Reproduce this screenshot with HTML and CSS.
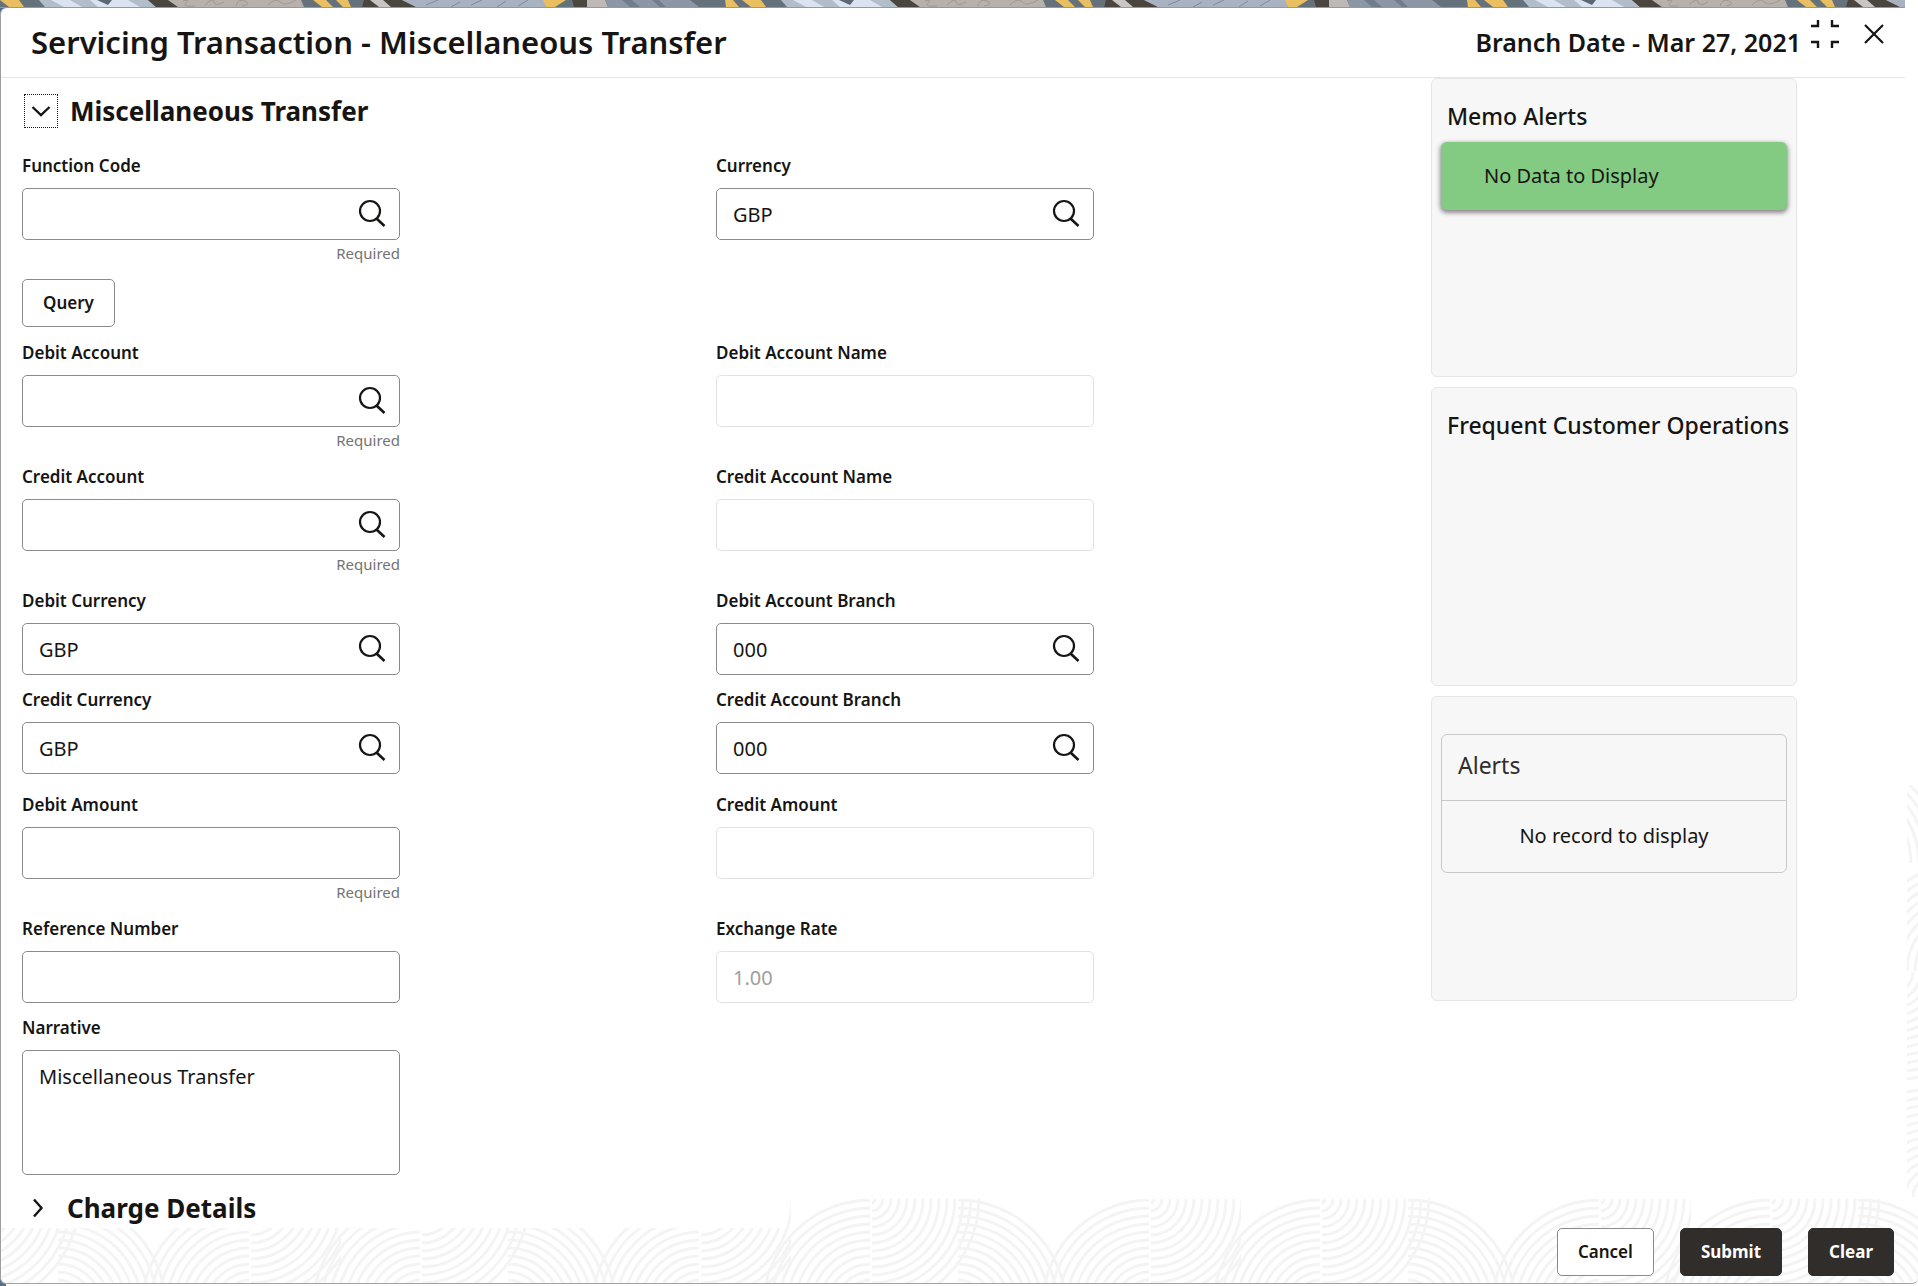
FILE: index.html
```
<!DOCTYPE html>
<html lang="en">
<head>
<meta charset="UTF-8">
<meta name="viewport" content="width=device-width, initial-scale=1">
<title>Servicing Transaction - Miscellaneous Transfer</title>
<link rel="stylesheet" href="styles.css">
</head>
<body>

<!-- shared icons -->
<svg class="defs" width="0" height="0" aria-hidden="true">
    <symbol id="icon-search" viewBox="0 0 28 28">
        <circle cx="12" cy="12" r="10" fill="none" stroke="#161513" stroke-width="2.2"/>
        <path d="M18.5 19.5L26.5 27" fill="none" stroke="#161513" stroke-width="2.6"/>
    </symbol>
</svg>

<!-- banner strip -->
<div class="banner">
    <svg width="100%" height="7" aria-hidden="true">
        <defs>
            <pattern id="strip" width="742" height="7" patternUnits="userSpaceOnUse">
                <rect width="742" height="7" fill="#66727b"/>
                <path d="M0 0H19L24 7H9Z" fill="#e9bf62"/>
                <path d="M39 0H148L156 7H45Z" fill="#b1bdc8"/>
                <path d="M51 0H70L82 7H64Z" fill="#dbe3f0"/>
                <path d="M80 0H128L140 7H94Z" fill="#dbe3f0"/>
                <path d="M78 0H90L98 7H86Z" fill="#b1bdc8"/>
                <path d="M97 0H112L108 5Z" fill="#5c6973"/>
                <path d="M148 0H168L178 7H156Z" fill="#4b4540"/>
                <path d="M168 0H301L304 7H178Z" fill="#b8b1ab"/>
                <path d="M183 1q8-2 3 2t9 3M205 5q8-8 9-3t10 0M236 6q2-8 9-5t-3 5M268 5q8-8 12-3t16-2" fill="none" stroke="#9d9893" stroke-width="1"/>
                <path d="M313 0H326L333 7H322ZM336 0H348L351 7H343Z" fill="#e9bf62"/>
                <path d="M364 0H402L416 7H362Z" fill="#4b4540"/>
                <path d="M370 0H383L391 7H379Z" fill="#c9c5c2"/>
                <path d="M402 0H544L546 7H416Z" fill="#a9b2c0"/>
                <path d="M438 0L426 5M460 2L451 7M482 0L471 5M506 1L497 7M528 0L518 6" stroke="#7f8a99" stroke-width="1"/>
                <path d="M543 0H566L555 7H546Z" fill="#e9bf62"/>
                <path d="M572 0H587V7H574Z" fill="#4b4540"/>
                <path d="M587 0H605L608 7H587Z" fill="#beb9b6"/>
                <path d="M605 0H690L699 7H608Z" fill="#8c96a5"/>
                <path d="M622 0L630 7H640L632 0ZM652 0L660 7H666L659 0Z" fill="#707d8a"/>
                <path d="M725 0H733L739 7H726Z" fill="#e9bf62"/>
            </pattern>
        </defs>
        <rect width="100%" height="7" fill="url(#strip)"/>
    </svg>
</div>

<div class="dialog">

    <header class="dialog-header">
        <h1>Servicing Transaction - Miscellaneous Transfer</h1>
        <span class="branch-date">Branch Date - Mar 27, 2021</span>
        <div class="window-buttons">
            <button type="button" class="icon-button" aria-label="Collapse">
                <svg width="28" height="28" viewBox="0 0 28 28" fill="none" stroke="#161513" stroke-width="2.4">
                    <path d="M0 6H7V0M21 0V6H28M0 22H7V28M28 22H21V28"/>
                </svg>
            </button>
            <button type="button" class="icon-button" aria-label="Close">
                <svg width="28" height="28" viewBox="0 0 28 28" fill="none" stroke="#161513" stroke-width="2.2">
                    <path d="M5 5L23 23M23 5L5 23"/>
                </svg>
            </button>
        </div>
    </header>

    <div class="dialog-body">

        <main class="form">
            <div class="section-title">
                <button type="button" class="toggle open" aria-label="Toggle Miscellaneous Transfer" aria-expanded="true">
                    <svg width="20" height="20" viewBox="0 0 20 20" fill="none" stroke="#161513" stroke-width="2.4">
                        <path d="M1.5 6L10 14L18.5 6"/>
                    </svg>
                </button>
                <h2>Miscellaneous Transfer</h2>
            </div>

            <div class="fields">
                <div class="field">
                    <label for="functionCode">Function Code</label>
                    <div class="box">
                        <input type="text" id="functionCode">
                        <button type="button" class="icon-button" aria-label="Search function code"><svg width="28" height="28"><use href="#icon-search"/></svg></button>
                    </div>
                    <p class="hint">Required</p>
                </div>
                <div class="field">
                    <label for="currency">Currency</label>
                    <div class="box">
                        <input type="text" id="currency" value="GBP">
                        <button type="button" class="icon-button" aria-label="Search currency"><svg width="28" height="28"><use href="#icon-search"/></svg></button>
                    </div>
                </div>
            </div>

            <button type="button" class="btn query">Query</button>

            <div class="fields">
                <div class="field">
                    <label for="debitAccount">Debit Account</label>
                    <div class="box">
                        <input type="text" id="debitAccount">
                        <button type="button" class="icon-button" aria-label="Search debit account"><svg width="28" height="28"><use href="#icon-search"/></svg></button>
                    </div>
                    <p class="hint">Required</p>
                </div>
                <div class="field">
                    <label for="debitAccountName">Debit Account Name</label>
                    <div class="box disabled">
                        <input type="text" id="debitAccountName" disabled>
                    </div>
                </div>

                <div class="field">
                    <label for="creditAccount">Credit Account</label>
                    <div class="box">
                        <input type="text" id="creditAccount">
                        <button type="button" class="icon-button" aria-label="Search credit account"><svg width="28" height="28"><use href="#icon-search"/></svg></button>
                    </div>
                    <p class="hint">Required</p>
                </div>
                <div class="field">
                    <label for="creditAccountName">Credit Account Name</label>
                    <div class="box disabled">
                        <input type="text" id="creditAccountName" disabled>
                    </div>
                </div>

                <div class="field">
                    <label for="debitCurrency">Debit Currency</label>
                    <div class="box">
                        <input type="text" id="debitCurrency" value="GBP">
                        <button type="button" class="icon-button" aria-label="Search debit currency"><svg width="28" height="28"><use href="#icon-search"/></svg></button>
                    </div>
                </div>
                <div class="field">
                    <label for="debitBranch">Debit Account Branch</label>
                    <div class="box">
                        <input type="text" id="debitBranch" value="000">
                        <button type="button" class="icon-button" aria-label="Search debit branch"><svg width="28" height="28"><use href="#icon-search"/></svg></button>
                    </div>
                </div>

                <div class="field">
                    <label for="creditCurrency">Credit Currency</label>
                    <div class="box">
                        <input type="text" id="creditCurrency" value="GBP">
                        <button type="button" class="icon-button" aria-label="Search credit currency"><svg width="28" height="28"><use href="#icon-search"/></svg></button>
                    </div>
                </div>
                <div class="field">
                    <label for="creditBranch">Credit Account Branch</label>
                    <div class="box">
                        <input type="text" id="creditBranch" value="000">
                        <button type="button" class="icon-button" aria-label="Search credit branch"><svg width="28" height="28"><use href="#icon-search"/></svg></button>
                    </div>
                </div>
            </div>

            <div class="fields amounts">
                <div class="field">
                    <label for="debitAmount">Debit Amount</label>
                    <div class="box">
                        <input type="text" id="debitAmount">
                    </div>
                    <p class="hint">Required</p>
                </div>
                <div class="field">
                    <label for="creditAmount">Credit Amount</label>
                    <div class="box disabled">
                        <input type="text" id="creditAmount" disabled>
                    </div>
                </div>

                <div class="field">
                    <label for="referenceNumber">Reference Number</label>
                    <div class="box">
                        <input type="text" id="referenceNumber">
                    </div>
                </div>
                <div class="field">
                    <label for="exchangeRate">Exchange Rate</label>
                    <div class="box disabled">
                        <input type="text" id="exchangeRate" value="1.00" disabled>
                    </div>
                </div>

                <div class="field">
                    <label for="narrative">Narrative</label>
                    <textarea id="narrative">Miscellaneous Transfer</textarea>
                </div>
            </div>
        </main>

        <aside class="side">
            <section class="panel">
                <h3>Memo Alerts</h3>
                <div class="memo">No Data to Display</div>
            </section>
            <section class="panel">
                <h3>Frequent Customer Operations</h3>
            </section>
            <section class="panel alerts">
                <div class="alerts-card">
                    <h4>Alerts</h4>
                    <p>No record to display</p>
                </div>
            </section>
        </aside>
    </div>

    <div class="section-title charge">
        <button type="button" class="toggle" aria-label="Toggle Charge Details" aria-expanded="false">
            <svg width="20" height="20" viewBox="0 0 20 20" fill="none" stroke="#161513" stroke-width="2.4">
                <path d="M6 1.5L13.5 10L6 18.5"/>
            </svg>
        </button>
        <h2>Charge Details</h2>
    </div>

    <footer class="actions">
        <button type="button" class="btn">Cancel</button>
        <button type="button" class="btn dark">Submit</button>
        <button type="button" class="btn dark">Clear</button>
    </footer>

    <!-- background waves -->
    <svg class="waves" aria-hidden="true">
        <defs>
            <!-- concentric quarter rings: up-left, up-right and down-right -->
            <g id="rings" fill="none" stroke="#f4f4f4" stroke-width="3">
                <circle r="4"/><circle r="12"/><circle r="20"/><circle r="28"/><circle r="36"/><circle r="44"/><circle r="52"/>
                <circle r="60"/><circle r="68"/><circle r="76"/><circle r="84"/><circle r="92"/><circle r="100"/><circle r="108"/>
            </g>
            <clipPath id="q-ul"><rect x="-110" y="-110" width="109" height="110"/></clipPath>
            <clipPath id="q-ur"><rect x="0" y="-110" width="110" height="110"/></clipPath>
            <clipPath id="q-dr"><rect x="1" y="0" width="109" height="110"/></clipPath>
            <g id="ul" clip-path="url(#q-ul)"><use href="#rings"/></g>
            <g id="ur" clip-path="url(#q-ur)"><use href="#rings"/></g>
            <g id="dr" clip-path="url(#q-dr)"><use href="#rings"/></g>
            <pattern id="wave" x="-110" width="450" height="84" patternUnits="userSpaceOnUse">
                <use href="#ul" x="80" y="109"/>
                <use href="#dr" x="80" y="0"/>
                <use href="#ur" x="167" y="109"/>
                <use href="#ul" x="359" y="109"/>
                <use href="#dr" x="359" y="0"/>
                <use href="#ul" x="530" y="109"/>
            </pattern>
        </defs>
        <rect width="100%" height="84" fill="url(#wave)"/>
    </svg>
    <svg class="waves-side" viewBox="0 0 11 414" aria-hidden="true">
        <use href="#ur" x="-72" y="78"/>
        <use href="#ul" x="60" y="186"/>
        <use href="#dr" x="-14" y="187"/>
        <use href="#ul" x="26" y="412"/>
    </svg>
</div>

</body>
</html>
```
FILE: styles.css
```
* {
    box-sizing: border-box;
    margin: 0;
    padding: 0;
}

body {
    min-height: 100vh;
    display: flex;
    flex-direction: column;
    padding-bottom: 2px;
    background: linear-gradient(to right, #56708a 6px, #fff 6px);
    color: #161513;
    font: 20px/24px "Noto Sans", "Open Sans", sans-serif;
}

button,
input,
textarea {
    font: inherit;
    color: inherit;
}

.defs {
    position: absolute;
}

.banner {
    height: 8px;
    margin-right: 13px;
    border-bottom: 1px solid #9a9896;
}

.banner svg {
    display: block;
}

.dialog {
    position: relative;
    flex: 1;
    display: flex;
    flex-direction: column;
    background: #fff;
    border-left: 1px solid #9e9e9e;
    border-bottom: 1px solid #a3a3a3;
    border-radius: 6px 0 6px 6px;
    overflow: hidden;
}

/* header */
.dialog-header {
    display: flex;
    align-items: center;
    height: 70px;
    margin-right: 13px;
    padding: 0 17px 2px 30px;
    border-bottom: 1px solid #e6e6e6;
}

.dialog-header h1 {
    flex: 1;
    font-size: 31px;
    font-weight: 600;
    line-height: 40px;
}

.branch-date {
    font-size: 25px;
    font-weight: 600;
    line-height: 40px;
}

.window-buttons {
    display: flex;
    align-self: flex-start;
    gap: 21px;
    margin: 12px 0 0 10px;
}

.icon-button {
    width: 28px;
    height: 28px;
    border: 0;
    background: none;
    cursor: pointer;
}

.icon-button svg {
    display: block;
}

/* form */
.dialog-body {
    display: grid;
    grid-template-columns: minmax(0, 1fr) 366px;
    column-gap: 21px;
    padding: 0 121px 0 21px;
}

.section-title {
    display: flex;
    align-items: center;
    gap: 12px;
}

.form .section-title {
    padding: 16px 0 26px 2px;
}

.section-title h2 {
    font-size: 26px;
    font-weight: 700;
    line-height: 34px;
}

.toggle {
    display: flex;
    align-items: center;
    justify-content: center;
    width: 34px;
    height: 34px;
    border: 1px solid transparent;
    background: none;
    cursor: pointer;
}

.toggle.open {
    border: 1px dotted #161513;
}

.fields {
    display: grid;
    grid-template-columns: 1fr 1fr;
    row-gap: 13px;
    align-items: start;
}

.amounts {
    margin-top: 19px;
}

.field {
    width: calc(50% + 31px);
}

.field label {
    display: block;
    margin-bottom: 10px;
    font-size: 17px;
    font-weight: 600;
}

.box {
    display: flex;
    align-items: center;
    height: 52px;
    padding-right: 13px;
    background: #fff;
    border: 1px solid #8b8a88;
    border-radius: 5px;
}

.box input {
    flex: 1;
    min-width: 0;
    height: 50px;
    padding-left: 16px;
    border: 0;
    outline: 0;
    background: none;
}

.box .icon-button {
    margin-bottom: 2px;
}

.box.disabled {
    border-color: #e2e2e2;
    color: #a09f9d;
}

.hint {
    margin-top: 2px;
    color: #747371;
    font-size: 15px;
    line-height: 23px;
    text-align: right;
}

textarea {
    display: block;
    width: 100%;
    height: 125px;
    padding: 14px 16px;
    border: 1px solid #8b8a88;
    border-radius: 5px;
    resize: none;
}

.btn {
    height: 48px;
    padding: 0 20px;
    background: #fff;
    border: 1px solid #8b8a88;
    border-radius: 5px;
    font-size: 17px;
    font-weight: 600;
    cursor: pointer;
}

.btn.dark {
    background: #312d2a;
    border-color: #312d2a;
    color: #fff;
    font-weight: 700;
}

.query {
    display: block;
    margin: 14px 0;
}

/* right side panels */
.side {
    display: flex;
    flex-direction: column;
    gap: 10px;
}

.panel {
    min-height: 299px;
    padding: 20px 9px 0;
    background: #f7f7f7;
    border: 1px solid #e6e6e6;
    border-radius: 6px;
}

.panel h3 {
    margin-bottom: 9px;
    padding-left: 6px;
    font-size: 23px;
    font-weight: 500;
    line-height: 34px;
    white-space: nowrap;
}

.memo {
    padding: 22px 43px;
    background: #83cb82;
    border-radius: 6px;
    box-shadow: 0 2px 4px 1px rgba(60, 50, 60, 0.55);
}

.alerts {
    min-height: 305px;
    padding-top: 37px;
}

.alerts-card {
    border: 1px solid #c8c8c8;
    border-radius: 6px;
}

.alerts-card h4 {
    padding: 14px 16px 18px;
    border-bottom: 1px solid #c8c8c8;
    color: #312d2a;
    font-size: 23px;
    font-weight: 400;
    line-height: 33px;
}

.alerts-card p {
    padding: 23px 16px 24px;
    text-align: center;
}

/* bottom part */
.charge {
    position: relative;
    z-index: 1;
    width: 41%;
    margin-top: auto;
    padding: 16px 0 3px 20px;
    background: #fff;
}

.actions {
    position: relative;
    z-index: 1;
    display: flex;
    justify-content: flex-end;
    gap: 26px;
    padding: 0 24px 7px;
}

.waves {
    position: absolute;
    left: 0;
    bottom: 0;
    width: 100%;
    height: 84px;
}

.waves-side {
    position: absolute;
    right: 0;
    bottom: 84px;
    width: 11px;
    height: 414px;
}
```
